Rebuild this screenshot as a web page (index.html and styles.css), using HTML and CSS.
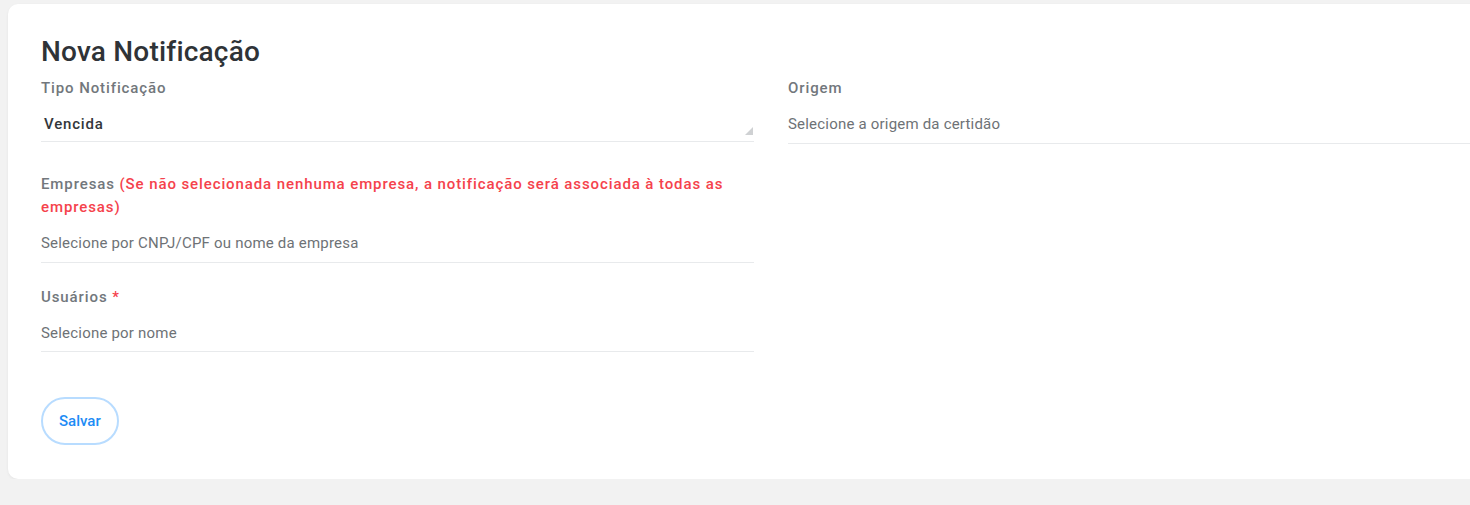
FILE: index.html
```html
<!DOCTYPE html>
<html lang="pt-BR">
<head>
<meta charset="utf-8">
<title>Nova Notificação</title>
<link rel="stylesheet" href="styles.css">
</head>
<body>
<main class="card">
  <h1 class="card-title">Nova Notificação</h1>
  <form class="form">
    <div class="form-grid">
      <div class="col">
        <div class="field field-type">
          <label class="field-label">Tipo Notificação</label>
          <div class="select-box">
            <span class="select-value">Vencida</span>
            <span class="resize-grip"></span>
          </div>
        </div>
        <div class="field field-companies">
          <label class="field-label">Empresas <span class="hint">(Se não selecionada nenhuma empresa, a notificação será associada à todas as empresas)</span></label>
          <div class="input-box"><span class="placeholder">Selecione por CNPJ/CPF ou nome da empresa</span></div>
        </div>
        <div class="field field-users">
          <label class="field-label">Usuários <span class="required">*</span></label>
          <div class="input-box"><span class="placeholder">Selecione por nome</span></div>
        </div>
      </div>
      <div class="col">
        <div class="field">
          <label class="field-label">Origem</label>
          <div class="input-box"><span class="placeholder">Selecione a origem da certidão</span></div>
        </div>
      </div>
    </div>
    <div class="actions">
      <button type="button" class="btn-outline">Salvar</button>
    </div>
  </form>
</main>
</body>
</html>
```
FILE: styles.css
```css
html, body {
  margin: 0;
  padding: 0;
  overflow: hidden;
  background: #f2f2f2;
  font-family: Roboto, "Liberation Sans", Arial, sans-serif;
}

.card {
  box-sizing: border-box;
  width: 1526px;
  margin: 4px 0 0 8px;
  padding: 32px 33px 34px;
  background: #fff;
  border-radius: 10px;
  box-shadow: 0 1px 3px rgba(0, 0, 0, 0.06);
}

.card-title {
  margin: 0 0 9px;
  font-size: 28px;
  line-height: 32px;
  font-weight: 500;
  color: #2f3337;
  letter-spacing: 0.2px;
}

.form-grid {
  display: grid;
  grid-template-columns: 713px 713px;
  column-gap: 34px;
  align-items: start;
}

.field {
  display: flex;
  flex-direction: column;
}

.field-type {
  margin-bottom: 31px;
}

.field-companies {
  margin-bottom: 23px;
}

.field-label {
  font-size: 15px;
  line-height: 23px;
  font-weight: 500;
  color: #72777c;
  letter-spacing: 0.9px;
}

.hint,
.required {
  color: #f5424c;
}

.select-box,
.input-box {
  display: flex;
  align-items: center;
  position: relative;
  padding: 14px 0 9px;
  border-bottom: 1px solid #e8eaec;
}

.select-box {
  padding-bottom: 7px;
}

.field-users .input-box {
  padding-bottom: 8px;
}

.select-value {
  padding-left: 3px;
  font-size: 15px;
  line-height: 20px;
  font-weight: 500;
  color: #33373b;
  letter-spacing: 0.8px;
}

.placeholder {
  font-size: 15px;
  line-height: 20px;
  color: #6e7276;
  letter-spacing: 0.2px;
}

.resize-grip {
  position: absolute;
  right: 1px;
  bottom: 6px;
  width: 0;
  height: 0;
  border-left: 8px solid transparent;
  border-bottom: 8px solid #cfd1d3;
}

.actions {
  padding-top: 45px;
}

.btn-outline {
  box-sizing: border-box;
  height: 48px;
  padding: 0 16px;
  background: #fff;
  border: 2px solid #b8dcff;
  border-radius: 24px;
  font-family: inherit;
  font-size: 15px;
  font-weight: 500;
  color: #1e8cf5;
  cursor: pointer;
}
```
